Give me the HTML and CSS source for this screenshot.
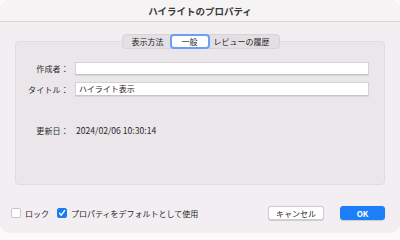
FILE: index.html
```html
<!DOCTYPE html>
<html lang="ja">
<head>
<meta charset="utf-8">
<link rel="stylesheet" href="styles.css">
</head>
<body>
<div class="window">
  <div class="titlebar">ハイライトのプロパティ</div>
  <div class="content">
    <div class="tabs">
      <div class="tab">表示方法</div>
      <div class="tab selected">一般</div>
      <div class="tab">レビューの履歴</div>
    </div>
    <div class="panel">
      <div class="row">
        <div class="label">作成者：</div>
        <div class="input"></div>
      </div>
      <div class="row">
        <div class="label">タイトル：</div>
        <div class="input">ハイライト表示</div>
      </div>
      <div class="row date">
        <div class="label">更新日：</div>
        <div class="value">2024/02/06 10:30:14</div>
      </div>
    </div>
    <div class="footer">
      <label class="check"><span class="box"></span>ロック</label>
      <label class="check"><span class="box on"><svg viewBox="0 0 10 10" width="10" height="10"><path d="M2.6 5.2 L4.3 7.2 L7.6 2.6" fill="none" stroke="#fff" stroke-width="1.4" stroke-linecap="round" stroke-linejoin="round"/></svg></span>プロパティをデフォルトとして使用</label>
      <div class="spacer"></div>
      <div class="btn">キャンセル</div>
      <div class="btn primary">OK</div>
    </div>
  </div>
</div>
</body>
</html>
```

FILE: styles.css
```css
html, body {
  margin: 0;
  padding: 0;
  background: #fbf9fa;
}
body {
  width: 400px;
  height: 233px;
  overflow: hidden;
  font-family: "Noto Sans CJK JP", "Noto Sans", sans-serif;
  color: #222;
}
.window {
  width: 400px;
  height: 233px;
  box-sizing: border-box;
  border-radius: 10px;
  background: #f2eef1;
  overflow: hidden;
  display: flex;
  flex-direction: column;
}
.titlebar {
  height: 22px;
  box-sizing: border-box;
  border-bottom: 1px solid #d8d4d7;
  background: #f6f3f5;
  display: flex;
  align-items: center;
  justify-content: center;
  font-size: 9.5px;
  font-weight: bold;
  color: #3a3a3a;
  padding-top: 1px;
}
.content {
  flex: 1;
  display: flex;
  flex-direction: column;
  padding: 12px 15px 0 15px;
}
.tabs {
  align-self: center;
  display: flex;
  align-items: center;
  height: 15px;
  box-sizing: border-box;
  background: #e3dfe2;
  border: 1px solid #d7d3d6;
  border-radius: 4px;
  margin-bottom: -8px;
  position: relative;
  z-index: 1;
  font-size: 8px;
  color: #222;
  margin-left: 1px;
}
.tab {
  padding: 0 7px;
  line-height: 13px;
}
.tab:first-child { padding-left: 9px; padding-right: 7px; }
.tab:last-child { padding-left: 5px; padding-right: 9px; }
.tab.selected {
  background: #fff;
  border: 2px solid #6aa0f2;
  border-radius: 4px;
  height: 15px;
  box-sizing: border-box;
  line-height: 11px;
  padding: 0 10px;
  margin: 0 -1px;
}
.panel {
  height: 144px;
  box-sizing: border-box;
  background: #eae6e9;
  border: 1px solid #e0dcdf;
  border-radius: 4px;
  padding: 20px 15px 0 0;
  display: flex;
  flex-direction: column;
  gap: 7px;
  font-size: 8px;
}
.row {
  display: flex;
  align-items: center;
}
.label {
  width: 53px;
  text-align: right;
  padding-right: 6px;
  color: #2a2a2a;
  white-space: nowrap;
  letter-spacing: 0.2px;
}
.input {
  flex: 1;
  height: 13px;
  box-sizing: border-box;
  background: #fff;
  border: 1px solid #d4d0d3;
  border-bottom-color: #c8c4c7;
  box-shadow: 0 0.5px 0.5px rgba(0,0,0,0.08);
  padding: 0 3px;
  line-height: 11px;
  color: #1a1a1a;
}
.row + .row .input { height: 14px; line-height: 12px; }
.row.date {
  margin-top: 21px;
}
.value {
  padding-left: 1px;
  color: #2a2a2a;
  font-size: 8.6px;
}
.footer {
  display: flex;
  align-items: center;
  margin-top: 21px;
  margin-left: -4px;
  font-size: 8px;
  color: #1f1f1f;
}
.check {
  display: flex;
  align-items: center;
  margin-right: 8px;
}
.box {
  width: 10px;
  height: 10px;
  box-sizing: border-box;
  border: 1px solid #c9c5c8;
  background: #fff;
  border-radius: 2px;
  margin-right: 4px;
  display: flex;
}
.box.on {
  background: #1a7cf5;
  border-color: #1a7cf5;
}
.box.on svg { margin: -1px; }
.spacer { flex: 1; }
.btn {
  height: 14px;
  box-sizing: border-box;
  border-radius: 3px;
  background: #fff;
  border: 0.5px solid #d0ccd0;
  box-shadow: 0 0.5px 1px rgba(0,0,0,0.15);
  display: flex;
  align-items: center;
  justify-content: center;
  font-size: 8px;
  color: #2a2a2a;
}
.btn:not(.primary) {
  width: 56px;
  margin-right: 16px;
}
.btn.primary {
  width: 45px;
  background: #1d7ff7;
  border-color: #1d7ff7;
  color: #fff;
  font-weight: bold;
  margin-right: 0;
}
```
